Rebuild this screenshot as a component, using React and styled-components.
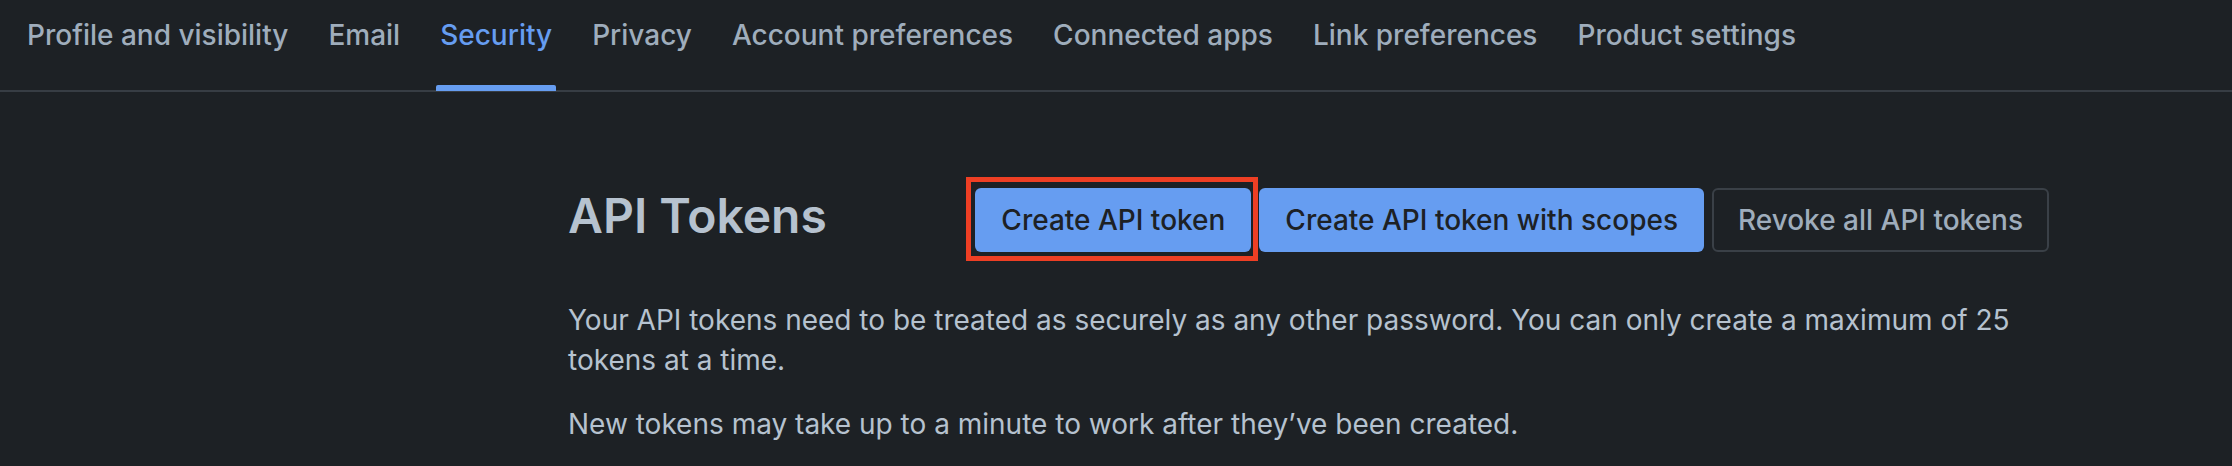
import styled, { createGlobalStyle } from "styled-components"

const GlobalStyle = createGlobalStyle`
    body {
        margin: 0;
        background-color: #1d2125;
        font-family: Inter, "Noto Sans", "Liberation Sans", sans-serif;
    }
`
const Page = styled.div`
    width: 2232px;
    min-height: 466px;
    background-color: #1d2125;
    overflow: hidden;
`
const Nav = styled.nav`
    display: flex;
    gap: 32px;
    padding: 0 0 0 23px;
    border-bottom: 2px solid #373d44;
`
const Tab = styled.a`
    position: relative;
    padding: 15px 4px 35px;
    font-size: 28px;
    line-height: 40px;
    font-weight: 500;
    white-space: nowrap;
    color: ${(props) => (props.$active ? "#669df1" : "#9fadbc")};
    cursor: pointer;

    &::after {
        content: "";
        display: ${(props) => (props.$active ? "block" : "none")};
        position: absolute;
        left: 0;
        right: 0;
        bottom: -1px;
        height: 6px;
        border-radius: 2px 2px 0 0;
        background-color: #669df1;
    }
`
const Content = styled.main`
    width: 1481px;
    margin: 96px 0 0 568px;
`
const Header = styled.div`
    display: flex;
    justify-content: space-between;
    align-items: flex-start;
`
const Title = styled.h1`
    margin: 0;
    font-size: 48px;
    line-height: 56px;
    font-weight: 600;
    color: #b6c2cf;
`
const Actions = styled.div`
    display: flex;
    gap: 8px;
`
const Highlight = styled.div`
    position: relative;
    display: flex;

    &::after {
        content: "";
        position: absolute;
        top: -11px;
        right: -7px;
        bottom: -9px;
        left: -9px;
        border: 5px solid #ee3f24;
        pointer-events: none;
    }
`
const Button = styled.button`
    height: 64px;
    padding: 0 ${(props) => (props.$subtle ? "24px" : "26px")};
    border: ${(props) => (props.$subtle ? "2px solid #3a4047" : "none")};
    border-radius: 6px;
    background-color: ${(props) => (props.$subtle ? "transparent" : "#669df1")};
    color: ${(props) => (props.$subtle ? "#9fadbc" : "#1d2125")};
    font-family: inherit;
    font-size: 28px;
    font-weight: 500;
    white-space: nowrap;
    cursor: pointer;
`
const Text = styled.p`
    margin: 48px 0 0;
    font-size: 28px;
    line-height: 40px;
    color: #b6c2cf;

    & + & {
        margin-top: 24px;
    }
`

const tabs = [
    "Profile and visibility",
    "Email",
    "Security",
    "Privacy",
    "Account preferences",
    "Connected apps",
    "Link preferences",
    "Product settings",
]

const App = () => {
  return (
    <Page>
        <GlobalStyle />
        <Nav>
            {tabs.map((tab) => (
                <Tab key={tab} $active={tab === "Security"}>{tab}</Tab>
            ))}
        </Nav>
        <Content>
            <Header>
                <Title>API Tokens</Title>
                <Actions>
                    <Highlight>
                        <Button>Create API token</Button>
                    </Highlight>
                    <Button>Create API token with scopes</Button>
                    <Button $subtle>Revoke all API tokens</Button>
                </Actions>
            </Header>
            <Text>
                Your API tokens need to be treated as securely as any other password. You can only create a maximum of 25 tokens at a time.
            </Text>
            <Text>
                New tokens may take up to a minute to work after they’ve been created.
            </Text>
        </Content>
    </Page>
  )
}

export default App
